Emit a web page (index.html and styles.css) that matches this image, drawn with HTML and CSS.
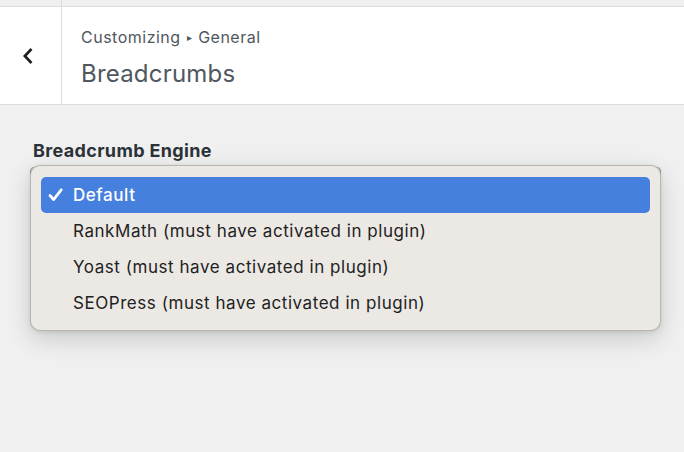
FILE: index.html
```html
<!DOCTYPE html>
<html>
<head>
<meta charset="utf-8">
<link rel="stylesheet" href="styles.css">
</head>
<body>
<div class="header">
  <div class="col back-col">
    <div class="strip"></div>
    <div class="cell back">
      <svg width="12" height="18" viewBox="0 0 12 18"><path d="M9.5 2 L2.8 9 L9.5 16" fill="none" stroke="#1e1e1e" stroke-width="2.6" stroke-linejoin="miter" stroke-linecap="butt"/></svg>
    </div>
  </div>
  <div class="col title-col">
    <div class="strip"></div>
    <div class="cell titles">
      <div class="crumb">Customizing <span class="tri">▸</span> General</div>
      <div class="title">Breadcrumbs</div>
    </div>
  </div>
</div>
<div class="content">
  <div class="label">Breadcrumb Engine</div>
  <div class="select-wrap">
    <div class="select"></div>
    <div class="menu">
      <div class="item active"><svg class="check" width="15" height="14" viewBox="0 0 15 14"><path d="M2 7.5 L5.6 11.6 L13.2 1.8" fill="none" stroke="#fff" stroke-width="2.7" stroke-linecap="round" stroke-linejoin="round"/></svg>Default</div>
      <div class="item">RankMath (must have activated in plugin)</div>
      <div class="item">Yoast (must have activated in plugin)</div>
      <div class="item">SEOPress (must have activated in plugin)</div>
    </div>
  </div>
</div>
</body>
</html>
```
FILE: styles.css
```css
html, body {
  margin: 0;
  padding: 0;
  background: #f0f0f0;
  font-family: Inter, "Noto Sans", "Liberation Sans", sans-serif;
}
.header {
  display: flex;
}
.col {
  display: flex;
  flex-direction: column;
}
.back-col {
  width: 61px;
  border-right: 1px solid #dcdcde;
}
.title-col {
  flex: 1;
}
.strip {
  height: 6px;
  background: #f0f0f0;
  border-bottom: 1px solid #dcdcde;
}
.cell {
  height: 98px;
  background: #fff;
  border-bottom: 1px solid #dcdcde;
}
.back {
  display: flex;
  align-items: center;
  justify-content: center;
  padding-right: 6px;
  box-sizing: border-box;
}
.titles {
  padding: 20px 0 0 19px;
  box-sizing: border-box;
}
.crumb {
  font-size: 16px;
  color: #50575e;
  line-height: 20px;
  letter-spacing: 0.5px;
}
.tri {
  font-size: 10px;
  position: relative;
  top: -2px;
  margin: 0 1px;
}
.title {
  font-size: 24px;
  color: #50575e;
  margin-top: 10px;
  line-height: 30px;
  letter-spacing: 0.2px;
}
.content {
  padding: 36px 24px 0 30px;
}
.label {
  font-size: 18px;
  font-weight: 700;
  color: #2c3338;
  padding-left: 3px;
  line-height: 20px;
  letter-spacing: 0.35px;
}
.select-wrap {
  position: relative;
  margin-top: 4px;
  height: 200px;
}
.select {
  margin-top: 6px;
  height: 44px;
  width: 631px;
  border: 1px solid #8c8f94;
  border-radius: 4px;
  background: #fff;
  box-sizing: border-box;
}
.menu {
  position: absolute;
  left: 0;
  top: -2px;
  width: 631px;
  box-sizing: border-box;
  padding: 11px 10px 9px 10px;
  background: #ece9e5;
  border: 1px solid rgba(0,0,0,0.22);
  border-radius: 10px;
  box-shadow: 0 8px 24px rgba(0,0,0,0.16), 0 1px 4px rgba(0,0,0,0.1);
}
.item {
  height: 36px;
  display: flex;
  align-items: center;
  padding-left: 32px;
  font-size: 17px;
  color: #222;
  border-radius: 5px;
  position: relative;
  letter-spacing: 0.55px;
}
.item.active {
  background: #4680de;
  color: #fff;
  font-weight: 500;
}
.check {
  position: absolute;
  left: 7px;
  top: 11px;
}
```
